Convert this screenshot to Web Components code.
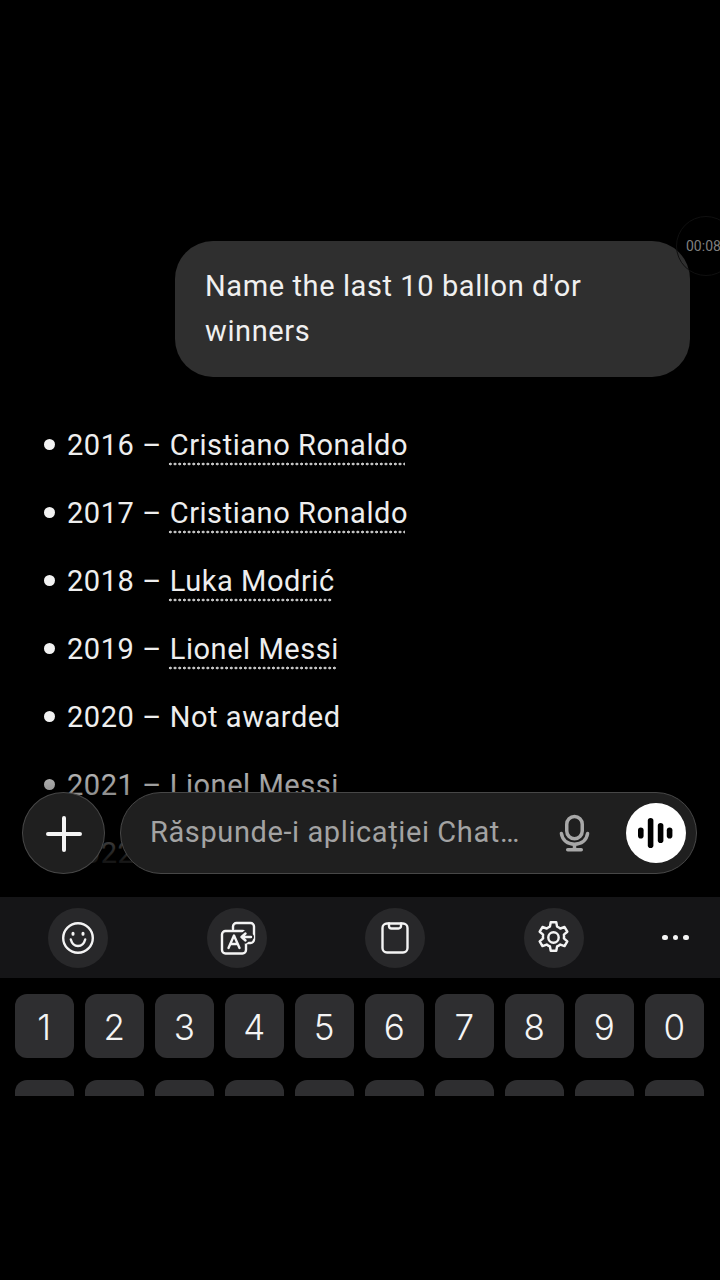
<!DOCTYPE html>
<html lang="ro">
<head>
<meta charset="utf-8">
<title>Chat</title>
<style>
  html, body { margin: 0; background: #000; }
  body { width: 720px; height: 1280px; overflow: hidden; font-family: Roboto, "Liberation Sans", sans-serif; color: #f2f2f2; }
</style>
</head>
<body>
<chat-view>
  <rec-timer slot="timer">00:08</rec-timer>
  <user-bubble>Name the last 10 ballon d'or winners</user-bubble>
  <answer-list>
    <answer-item year="2016"><term-link>Cristiano Ronaldo</term-link></answer-item>
    <answer-item year="2017"><term-link>Cristiano Ronaldo</term-link></answer-item>
    <answer-item year="2018"><term-link>Luka Modrić</term-link></answer-item>
    <answer-item year="2019"><term-link>Lionel Messi</term-link></answer-item>
    <answer-item year="2020">Not awarded</answer-item>
    <answer-item year="2021"><term-link>Lionel Messi</term-link></answer-item>
    <answer-item year="2022"><term-link>Karim Benzema</term-link></answer-item>
  </answer-list>
  <composer-bar slot="composer" placeholder="Răspunde-i aplicației Chat…"></composer-bar>
</chat-view>
<key-toolbar></key-toolbar>
<num-keys></num-keys>

<script>
// vedere della chat: scorre sotto la barra di input
class ChatView extends HTMLElement {
  connectedCallback() {
    this.attachShadow({ mode: 'open' });
    this.shadowRoot.innerHTML = `
      <style>
        :host { display: block; position: relative; height: 897px; overflow: hidden; box-sizing: border-box; padding-top: 241px; }
        .fade { position: absolute; left: 0; right: 0; top: 740px; height: 130px; pointer-events: none;
          background: linear-gradient(to bottom, rgba(0,0,0,0), rgba(0,0,0,.97)); }
      </style>
      <slot></slot>
      <div class="fade"></div>
      <slot name="timer"></slot>
      <slot name="composer"></slot>
    `;
  }
}

class RecTimer extends HTMLElement {
  connectedCallback() {
    this.attachShadow({ mode: 'open' });
    this.shadowRoot.innerHTML = `
      <style>
        :host { position: absolute; left: 676px; top: 216px; width: 60px; height: 60px; box-sizing: border-box;
          border: 1px solid #101010; border-radius: 50%; padding-left: 9px;
          font-size: 14px; line-height: 58px; color: #7f7f7f; white-space: nowrap; }
      </style>
      <slot></slot>
    `;
  }
}

class UserBubble extends HTMLElement {
  connectedCallback() {
    this.attachShadow({ mode: 'open' });
    this.shadowRoot.innerHTML = `
      <style>
        :host { display: block; box-sizing: border-box; width: 515px; height: 136px; margin-left: 175px;
          padding: 23px 60px 0 30px; background: #2f2f2f; border-radius: 38px;
          font-size: 29px; letter-spacing: .6px; line-height: 45px; color: #f0f0f0; }
      </style>
      <slot></slot>
    `;
  }
}

class AnswerList extends HTMLElement {
  connectedCallback() {
    this.attachShadow({ mode: 'open' });
    this.shadowRoot.innerHTML = `
      <style>
        :host { display: flex; flex-direction: column; gap: 28px; margin-top: 48px; padding-left: 44px; }
      </style>
      <slot></slot>
    `;
  }
}

class AnswerItem extends HTMLElement {
  connectedCallback() {
    this.attachShadow({ mode: 'open' });
    const year = this.getAttribute('year') || '';
    this.shadowRoot.innerHTML = `
      <style>
        :host { display: flex; align-items: center; height: 40px; font-size: 29px; letter-spacing: .55px; line-height: 42px; color: #eeeeee; white-space: nowrap; }
        .dot { flex: none; width: 11px; height: 11px; margin: -2px 12px 0 0; border-radius: 50%; background: #f2f2f2; }
        .year { margin-right: 8px; }
      </style>
      <span class="dot"></span><span class="year">${year} –</span><slot></slot>
    `;
  }
}

class TermLink extends HTMLElement {
  connectedCallback() {
    this.attachShadow({ mode: 'open' });
    this.shadowRoot.innerHTML = `
      <style>
        :host { display: inline-block; position: relative; height: 42px; }
        :host::after { content: ""; position: absolute; left: -2px; right: 3px; bottom: 0; height: 4px;
          background: radial-gradient(circle, #c4c4c4 1.2px, rgba(0,0,0,0) 1.7px) 0 0 / 4.7px 4px repeat-x; }
      </style>
      <slot></slot>
    `;
  }
}

class ComposerBar extends HTMLElement {
  connectedCallback() {
    this.attachShadow({ mode: 'open' });
    const ph = this.getAttribute('placeholder') || '';
    this.shadowRoot.innerHTML = `
      <style>
        :host { position: absolute; left: 22px; top: 792px; width: 675px; height: 82px; display: flex; gap: 15px; }
        .plus { flex: none; width: 83px; height: 82px; box-sizing: border-box; border-radius: 50%;
          background: #1f1f1f; border: 1.5px solid #474747; display: flex; align-items: center; justify-content: center; }
        .field { flex: 1; box-sizing: border-box; border-radius: 41px; background: #1f1f1f; border: 1.5px solid #474747;
          display: flex; align-items: center; padding: 0 10px 0 29px; }
        .ph { flex: 1; font-size: 29px; letter-spacing: .6px; color: #a3a3a3; white-space: nowrap; padding-bottom: 2px; }
        .mic { flex: none; display: block; margin-right: 36px; }
        .voice { flex: none; width: 60px; height: 60px; border-radius: 50%; background: #fff;
          display: flex; align-items: center; justify-content: center; }
      </style>
      <div class="plus">
        <svg width="36" height="36" viewBox="0 0 36 36" fill="none" stroke="#f5f5f5" stroke-width="4" stroke-linecap="round" style="margin:2px 0 0 1px">
          <path d="M18 2V34M2 18H34"/>
        </svg>
      </div>
      <div class="field">
        <span class="ph">${ph}</span>
        <svg class="mic" width="31" height="38" viewBox="0 0 32 38" fill="none" stroke="#a8a8a8" stroke-width="3.6" stroke-linecap="round">
          <rect x="8" y="2" width="16" height="23" rx="8"/>
          <path d="M2.500 19.500C3.500 26.500 9 30.500 16 30.500S28.500 26.500 29.500 19.500"/>
          <path d="M16 31V36M9 36.200H23"/>
        </svg>
        <div class="voice">
          <svg width="40" height="32" viewBox="0 0 40 32" fill="#000">
            <rect x="2" y="10.500" width="5.600" height="11" rx="2.800"/>
            <rect x="11.800" y="1" width="5.600" height="30" rx="2.800"/>
            <rect x="21.800" y="6" width="5.600" height="20" rx="2.800"/>
            <rect x="30.800" y="10.500" width="5.600" height="11" rx="2.800"/>
          </svg>
        </div>
      </div>
    `;
  }
}

class KeyToolbar extends HTMLElement {
  connectedCallback() {
    this.attachShadow({ mode: 'open' });
    this.shadowRoot.innerHTML = `
      <style>
        :host { display: flex; align-items: center; box-sizing: border-box; height: 81px; padding-left: 48px; gap: 98.500px; background: #151517; }
        .btn { flex: none; width: 60px; height: 60px; border-radius: 50%; background: #28282a;
          display: flex; align-items: center; justify-content: center; }
        svg { display: block; fill: none; stroke: #f4f4f4; stroke-width: 2.400; stroke-linecap: round; stroke-linejoin: round; }
        .more { flex: none; margin-left: -20px; display: flex; gap: 5px; }
        .more i { width: 5.500px; height: 5.500px; border-radius: 50%; background: #f4f4f4; }
      </style>
      <div class="btn">
        <svg width="34" height="34" viewBox="0 0 34 34">
          <circle cx="17" cy="17" r="14.800"/>
          <path d="M9.800 18.500C11 23 14 25 17 25S23 23 24.200 18.500"/>
          <path d="M12 12.200V13.200M22 12.200V13.200" stroke-width="3"/>
        </svg>
      </div>
      <div class="btn">
        <svg width="36" height="34" viewBox="0 0 36 34" style="margin-left:2px">
          <path d="M13 8V5.500A3.500 3.500 0 0 1 16.500 2H30.500A3.500 3.500 0 0 1 34 5.500V18.500A3.500 3.500 0 0 1 30.500 22H22"/>
          <rect x="2" y="10" width="24" height="22.500" rx="3.500" fill="#28282a"/>
          <path d="M8.500 27L14 14.500L19.500 27M10.500 23H17.500"/>
          <path d="M31 16H22M25.500 12.500L22 16L25.500 19.500" stroke="#28282a" stroke-width="6"/>
          <path d="M31 16H21.500M25.500 12.500L21.500 16L25.500 19.500"/>
        </svg>
      </div>
      <div class="btn">
        <svg width="28" height="32" viewBox="0 0 28 32">
          <rect x="1.500" y="1.500" width="25" height="29" rx="4.500"/>
          <path d="M8 1.500V4A2.500 2.500 0 0 0 10.500 6.500H17.500A2.500 2.500 0 0 0 20 4V1.500"/>
        </svg>
      </div>
      <div class="btn">
        <svg width="39" height="39" viewBox="0 0 24 24" style="stroke-width:1.500">
          <circle cx="12" cy="12" r="3.200"/>
          <path d="M10.300 2.600h3.400l.5 2.700a7.200 7.200 0 0 1 2 1.150l2.600-.9 1.700 2.900-2.100 1.800a7.200 7.200 0 0 1 0 2.300l2.100 1.800-1.700 2.900-2.600-.9a7.200 7.200 0 0 1-2 1.150l-.5 2.700h-3.400l-.5-2.700a7.200 7.200 0 0 1-2-1.150l-2.600.9-1.700-2.900 2.100-1.800a7.200 7.200 0 0 1 0-2.300L3.500 8.450l1.700-2.900 2.600.9a7.200 7.200 0 0 1 2-1.150z"/>
        </svg>
      </div>
      <div class="more"><i></i><i></i><i></i></div>
    `;
  }
}

class NumKeys extends HTMLElement {
  connectedCallback() {
    this.attachShadow({ mode: 'open' });
    const keys = ['1','2','3','4','5','6','7','8','9','0'];
    const row = keys.map(k => `<div class="key">${k}</div>`).join('');
    const empty = keys.map(() => `<div class="key"></div>`).join('');
    this.shadowRoot.innerHTML = `
      <style>
        :host { display: grid; grid-template-columns: repeat(10, 59.500px); column-gap: 10.500px; row-gap: 22px;
          align-content: start; box-sizing: border-box; height: 118px; padding: 16px 0 0 14.500px; overflow: hidden; background: #000; }
        .key { height: 64px; border-radius: 12px; background: #2e2e30; color: #f4f4f4;
          font-family: Inter, "Liberation Sans", sans-serif; font-size: 35px; font-weight: 300;
          line-height: 67px; text-align: center; }
      </style>
      ${row}${empty}
    `;
  }
}

customElements.define('chat-view', ChatView);
customElements.define('rec-timer', RecTimer);
customElements.define('user-bubble', UserBubble);
customElements.define('answer-list', AnswerList);
customElements.define('answer-item', AnswerItem);
customElements.define('term-link', TermLink);
customElements.define('composer-bar', ComposerBar);
customElements.define('key-toolbar', KeyToolbar);
customElements.define('num-keys', NumKeys);
</script>
</body>
</html>
